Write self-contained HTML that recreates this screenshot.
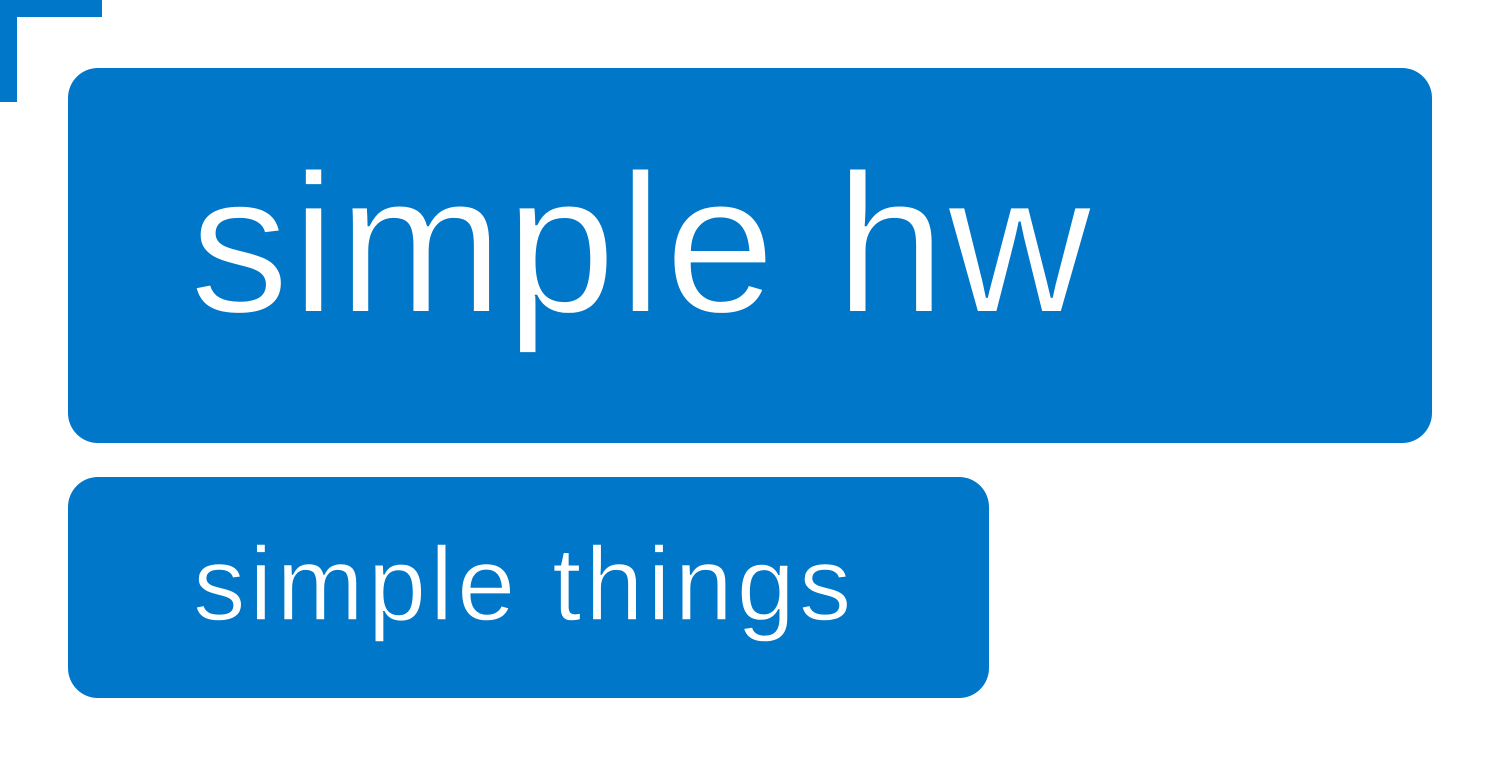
<!DOCTYPE html>
<html><head><meta charset="utf-8"><style>
html,body{margin:0;padding:0;background:#fff;width:1500px;height:767px;overflow:hidden;position:relative}
.b{position:absolute;background:#0077c8}
.t{position:absolute;color:#fff;font-family:"Liberation Sans",sans-serif;line-height:1;white-space:nowrap}
</style></head><body>
<div class="b" style="left:0;top:0;width:102px;height:17px"></div>
<div class="b" style="left:0;top:0;width:17px;height:102px"></div>
<div class="b" style="left:68px;top:68px;width:1364px;height:375px;border-radius:30px"></div>
<div class="b" style="left:68px;top:477px;width:921px;height:221px;border-radius:30px"></div>
<div class="t" style="left:190px;top:145px;font-size:198px;letter-spacing:2.6px;-webkit-text-stroke:2px #0077c8">simple hw</div>
<div class="t" style="left:193px;top:532px;font-size:105px;letter-spacing:3.8px;-webkit-text-stroke:1.4px #0077c8">simple things</div>
</body></html>
